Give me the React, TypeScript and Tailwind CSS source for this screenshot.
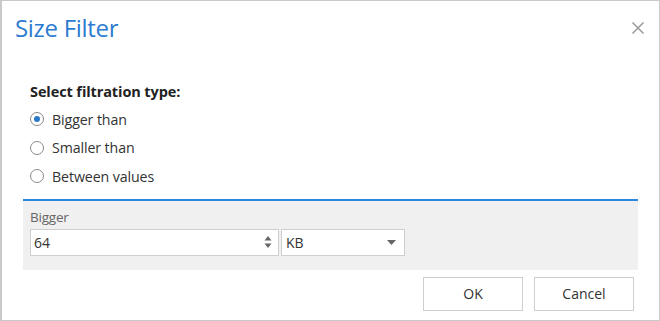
import { useState } from 'react';

const options = ['Bigger than', 'Smaller than', 'Between values'];

function Radio({ checked }: { checked: boolean }) {
  return (
    <span className="w-[14px] h-[14px] rounded-full border border-[#8a8a8a] bg-white flex items-center justify-center">
      {checked && <span className="w-[6px] h-[6px] rounded-full bg-[#2b78c8]" />}
    </span>
  );
}

export default function App() {
  const [selected, setSelected] = useState(0);

  return (
    <div
      className="w-[660px] h-[321px] bg-white border border-[#c9c9c9] border-l-2 flex flex-col text-[#333]"
      style={{ fontFamily: '"Open Sans", "Noto Sans", sans-serif' }}
    >
      {/* Header */}
      <div className="flex items-start justify-between h-[58px] pl-[13px] pr-[14px]">
        <h1 className="text-[24px] leading-none text-[#2c7bd0] mt-[15px] tracking-[-0.3px]">Size Filter</h1>
        <svg className="mt-[20px]" width="14" height="14" viewBox="0 0 14 14">
          <path d="M1.5 1.5 L12.5 12.5 M12.5 1.5 L1.5 12.5" stroke="#9a9a9a" strokeWidth="1.5" />
        </svg>
      </div>

      <div className="px-[21px]">
        {/* Filtration type */}
        <div className="pl-[7px] pt-[23px] pb-[8px]">
          <div className="text-[14.5px] font-bold leading-[20px] tracking-[-0.1px] text-[#222]">Select filtration type:</div>
          <div className="flex flex-col mt-[3px]">
            {options.map((label, i) => (
              <button
                key={label}
                onClick={() => setSelected(i)}
                className="flex items-center gap-[8px] h-[28.5px] text-[14.2px] tracking-[-0.1px] text-[#333] text-left"
              >
                <Radio checked={selected === i} />
                {label}
              </button>
            ))}
          </div>
        </div>

        {/* Values panel */}
        <div className="h-[2px] bg-[#2e86de]" />
        <div className="bg-[#f0f0f0] h-[69px] px-[7px] pt-[7px]">
          <div className="text-[13.5px] text-[#666] leading-[18px] tracking-[-0.2px]">Bigger</div>
          <div className="flex gap-[2px] mt-[3px]">
            <div className="w-[249px] h-[27px] bg-white border border-[#cfcfcf] flex items-center justify-between pl-[3px] pr-[6px]">
              <span className="text-[14px] text-[#333]">64</span>
              <svg width="8" height="16" viewBox="0 0 8 16">
                <path d="M4 2 L7.5 6.5 H0.5 Z" fill="#666" />
                <path d="M4 14 L7.5 9.5 H0.5 Z" fill="#666" />
              </svg>
            </div>
            <div className="w-[124px] h-[27px] bg-white border border-[#cfcfcf] flex items-center justify-between pl-[4px] pr-[8px]">
              <span className="text-[14px] text-[#333]">KB</span>
              <svg width="9" height="5" viewBox="0 0 9 5">
                <path d="M0 0 H9 L4.5 5 Z" fill="#666" />
              </svg>
            </div>
          </div>
        </div>
      </div>

      {/* Footer */}
      <div className="flex justify-end gap-[11px] pr-[25px] pt-[7px]">
        <button className="w-[100px] h-[34px] bg-white border border-[#cfcfcf] text-[14px] text-[#333]">OK</button>
        <button className="w-[100px] h-[34px] bg-white border border-[#cfcfcf] text-[14px] text-[#333]">Cancel</button>
      </div>
    </div>
  );
}
